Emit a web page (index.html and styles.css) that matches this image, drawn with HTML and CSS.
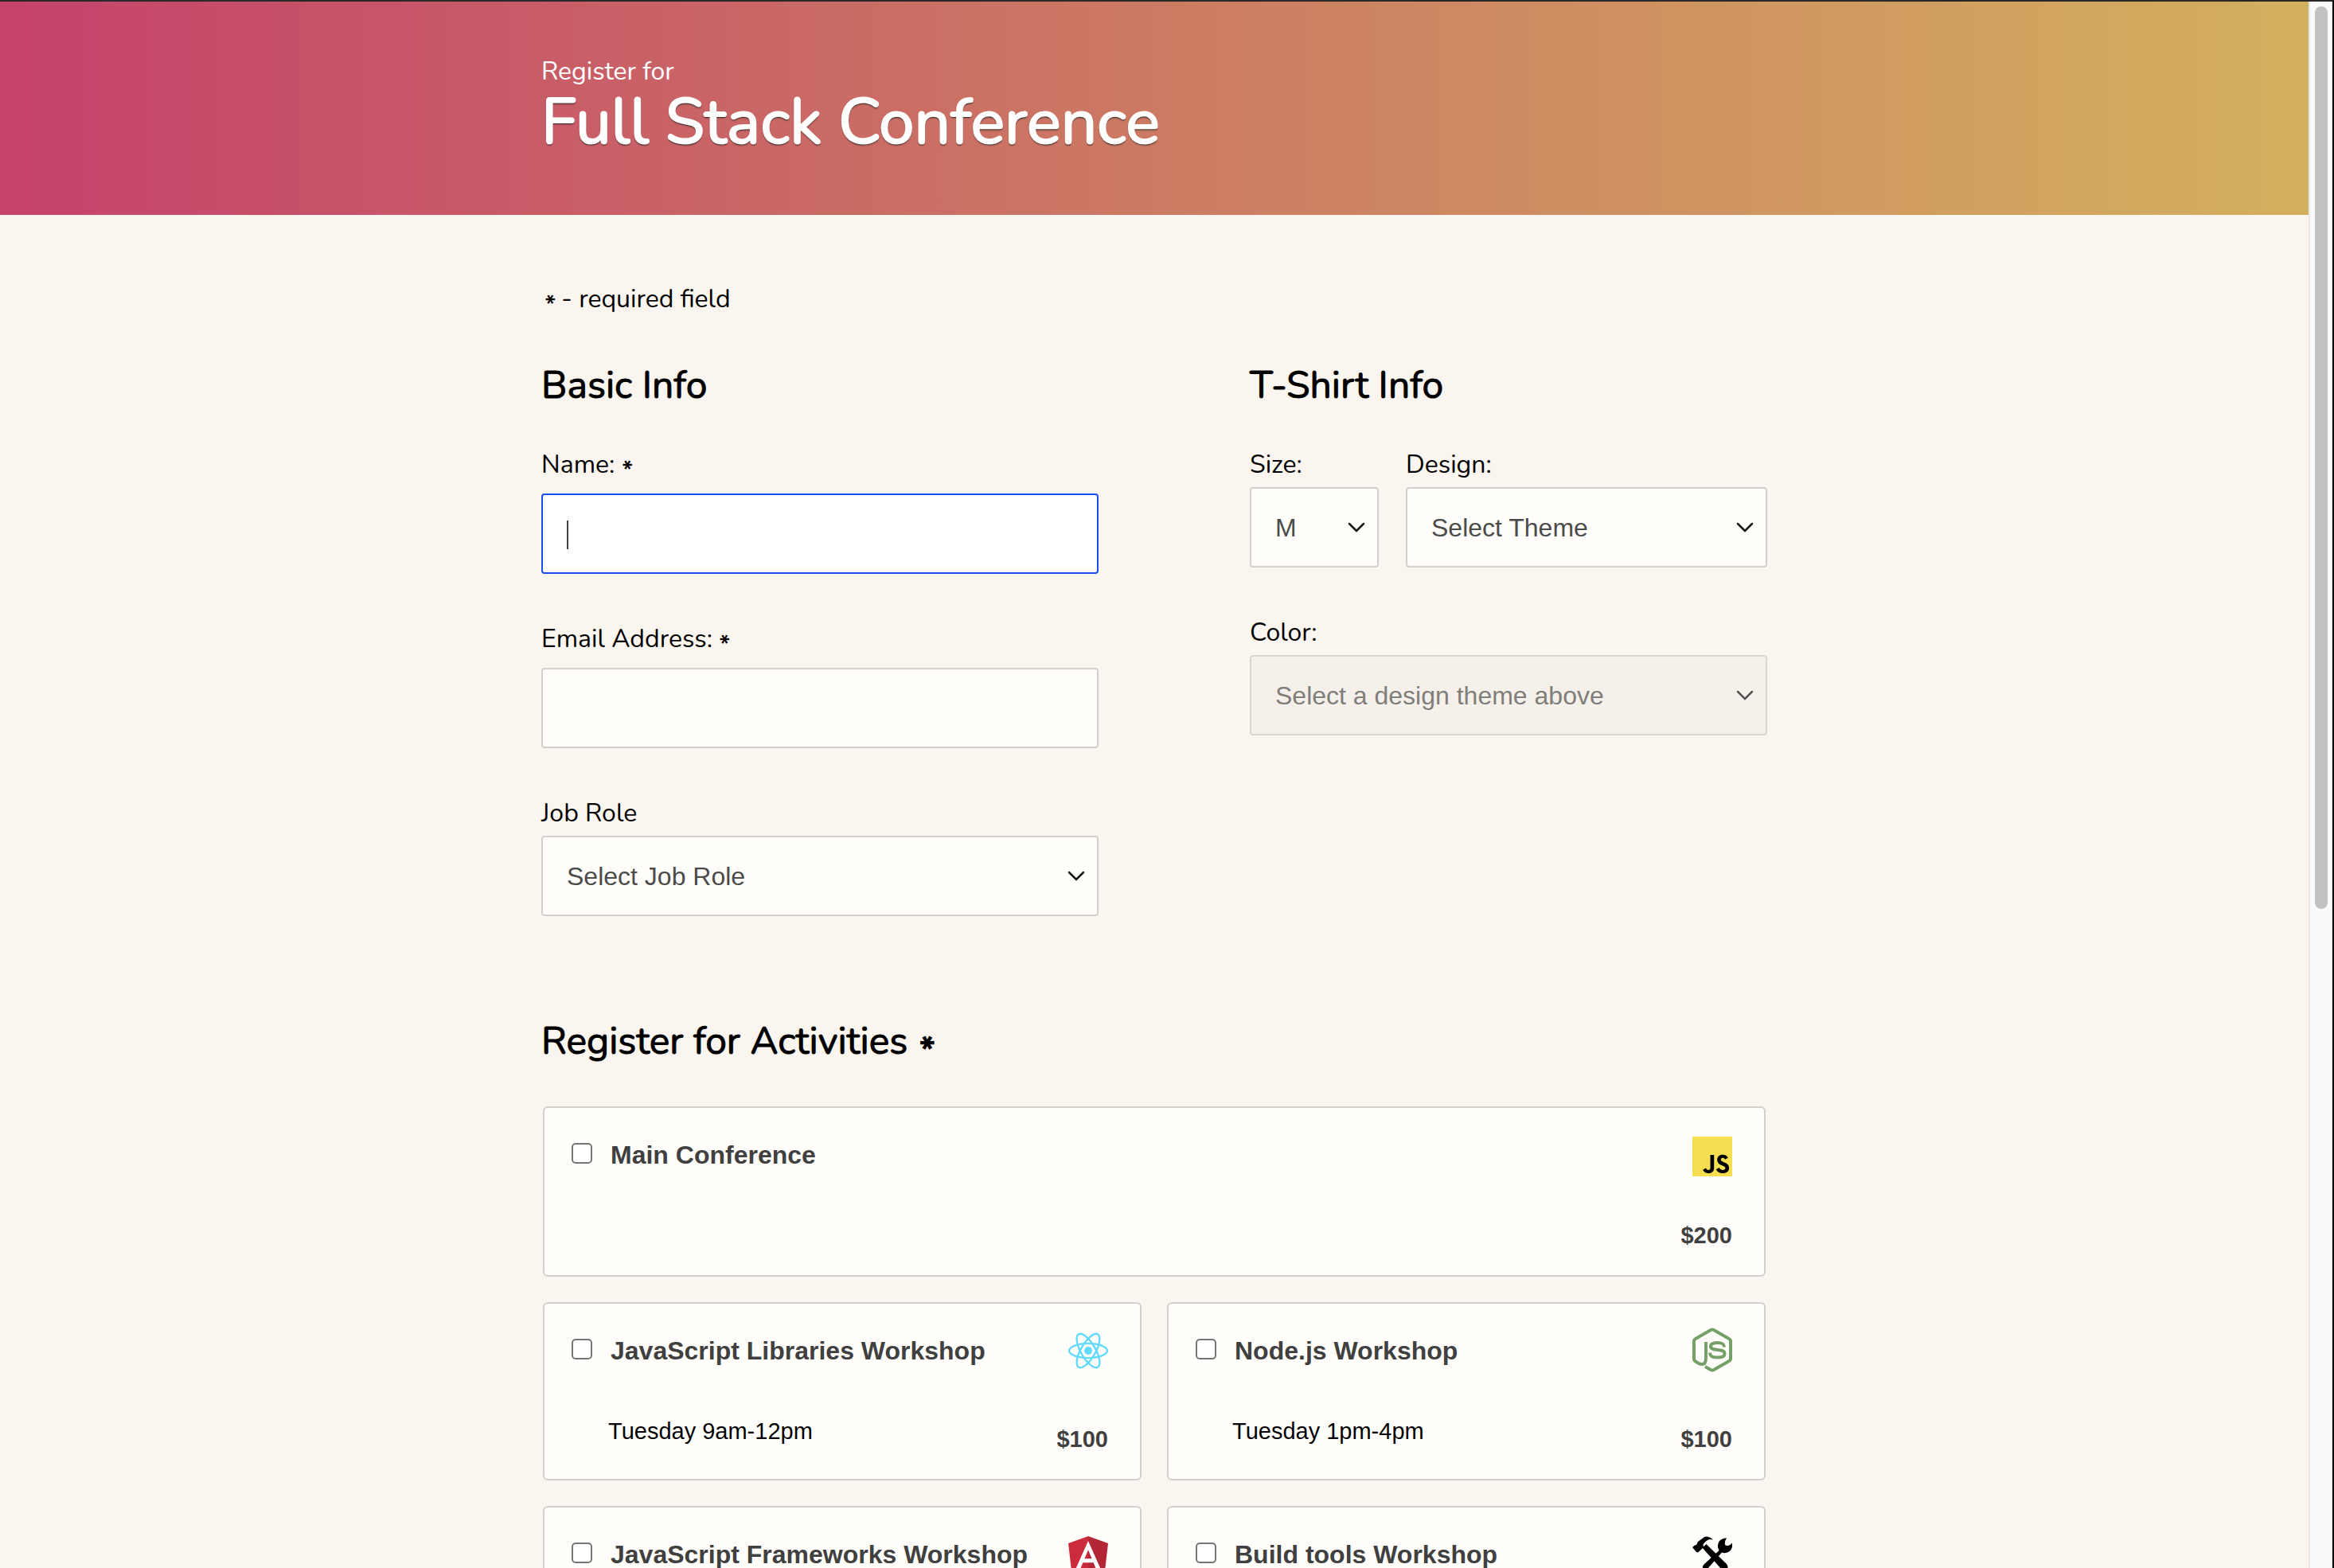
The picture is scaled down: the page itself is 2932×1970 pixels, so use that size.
FILE: index.html
```html
<!DOCTYPE html>
<html lang="en">
<head>
  <meta charset="utf-8">
  <meta name="viewport" content="width=device-width, initial-scale=1">
  <title>Full Stack Conference</title>
  <link rel="stylesheet" href="styles.css">
</head>
<body>
  <div class="window">
    <div class="page">
      <header class="header">
        <div class="container">
          <p class="header-lead">Register for</p>
          <h1 class="header-title">Full Stack Conference</h1>
        </div>
      </header>

      <form class="container form">
        <p class="note"><span class="asterisk">*</span> - required field</p>

        <div class="columns">
          <fieldset class="group">
            <legend class="heading">Basic Info</legend>
            <div class="fields">
              <div class="field field--text">
                <label for="name">Name: <span class="asterisk">*</span></label>
                <div class="input-wrap">
                  <input class="control control--active" type="text" id="name" name="user-name">
                  <span class="caret"></span>
                </div>
              </div>
              <div class="field field--text">
                <label for="email">Email Address: <span class="asterisk">*</span></label>
                <input class="control" type="email" id="email" name="user-email">
              </div>
              <div class="field">
                <label for="title">Job Role</label>
                <select class="control control--select" id="title" name="user-title">
                  <option>Select Job Role</option>
                </select>
              </div>
            </div>
          </fieldset>

          <fieldset class="group">
            <legend class="heading">T-Shirt Info</legend>
            <div class="fields">
              <div class="shirt-row">
                <div class="field">
                  <label for="size">Size:</label>
                  <select class="control control--select" id="size" name="user-size">
                    <option>M</option>
                  </select>
                </div>
                <div class="field">
                  <label for="design">Design:</label>
                  <select class="control control--select" id="design" name="user-design">
                    <option>Select Theme</option>
                  </select>
                </div>
              </div>
              <div class="field">
                <label for="color">Color:</label>
                <select class="control control--select" id="color" name="user-color" disabled>
                  <option>Select a design theme above</option>
                </select>
              </div>
            </div>
          </fieldset>
        </div>

        <fieldset class="group activities">
          <legend class="heading">Register for Activities <span class="asterisk asterisk--large">*</span></legend>
          <div class="cards">
            <label class="card card--wide">
              <input class="card-check" type="checkbox" name="all">
              <span class="card-body">
                <span class="card-title">Main Conference</span>
              </span>
              <span class="card-side">
                <span class="card-icon">
                  <svg width="50" height="50" viewBox="0 0 630 630" aria-hidden="true">
                    <path fill="#f5de50" d="M0 0h630v630H0z"/>
                    <path d="M423.2 492.19c12.69 20.72 29.2 35.95 58.4 35.95 24.53 0 40.2-12.26 40.2-29.2 0-20.3-16.1-27.49-43.1-39.3l-14.8-6.35c-42.72-18.2-71.1-41-71.1-89.2 0-44.4 33.83-78.2 86.7-78.2 37.64 0 64.7 13.1 84.2 47.4l-46.1 29.6c-10.15-18.2-21.1-25.37-38.1-25.37-17.34 0-28.33 11-28.33 25.37 0 17.76 11 24.95 36.4 35.95l14.8 6.34c50.3 21.57 78.7 43.56 78.7 93 0 53.3-41.87 82.5-98.1 82.5-54.98 0-90.5-26.2-107.88-60.54zm-209.13 5.13c9.3 16.5 17.76 30.45 38.1 30.45 19.45 0 31.72-7.61 31.72-37.2v-201.3h59.2v202.1c0 61.3-35.94 89.2-88.4 89.2-47.4 0-74.85-24.53-88.81-54.075z"/>
                  </svg>
                </span>
                <span class="card-cost">$200</span>
              </span>
            </label>

            <label class="card">
              <input class="card-check" type="checkbox" name="js-libs">
              <span class="card-body">
                <span class="card-title">JavaScript Libraries Workshop</span>
                <span class="card-time">Tuesday 9am-12pm</span>
              </span>
              <span class="card-side">
                <span class="card-icon">
                  <svg width="50" height="54" viewBox="-11.5 -12.42 23 24.84" aria-hidden="true">
                    <circle r="2.3" fill="#61dafb"/>
                    <g fill="none" stroke="#61dafb" stroke-width="1.1">
                      <ellipse rx="11" ry="4.2"/>
                      <ellipse rx="11" ry="4.2" transform="rotate(60)"/>
                      <ellipse rx="11" ry="4.2" transform="rotate(120)"/>
                    </g>
                  </svg>
                </span>
                <span class="card-cost">$100</span>
              </span>
            </label>

            <label class="card">
              <input class="card-check" type="checkbox" name="node">
              <span class="card-body">
                <span class="card-title">Node.js Workshop</span>
                <span class="card-time">Tuesday 1pm-4pm</span>
              </span>
              <span class="card-side">
                <span class="card-icon">
                  <svg width="50" height="56" viewBox="0 0 50 56" fill="none" stroke="#75a068" stroke-width="4" aria-hidden="true">
                    <path d="M17 18V38Q17 46 12 46Q10 46 8 45L4 42.5Q2 41.5 2 39V17Q2 15 4 14L23 3Q25 2 27 3L46 14Q48 15 48 17V39Q48 41 46 42L27 53Q25 54 23 53L16 49"/>
                    <path d="M40 24.5C40 20 37 19 31 19C26 19 23 20.5 23 23.5C23 27 27 27.500 32 28C37 28.5 40.5 29 40.5 33C40.5 36.5 37 37.5 31.5 37.5C25 37.5 22 36 22 31.5"/>
                  </svg>
                </span>
                <span class="card-cost">$100</span>
              </span>
            </label>

            <label class="card">
              <input class="card-check" type="checkbox" name="js-frameworks">
              <span class="card-body">
                <span class="card-title">JavaScript Frameworks Workshop</span>
                <span class="card-time">Tuesday 9am-12pm</span>
              </span>
              <span class="card-side">
                <span class="card-icon">
                  <svg width="50" height="50" viewBox="31.9 30 186.2 186.2" overflow="visible" aria-hidden="true">
                    <path fill="#cb2b3a" d="M125 30 31.9 63.2l14.2 123.1L125 230z"/>
                    <path fill="#b32636" d="M125 30v200l78.9-43.7 14.2-123.1z"/>
                    <path fill="#fff" d="M125 52.1 66.8 182.6h21.7l11.7-29.2h49.4l11.7 29.2H183L125 52.1zm17 83.3h-34l17-40.9z"/>
                  </svg>
                </span>
                <span class="card-cost">$100</span>
              </span>
            </label>

            <label class="card">
              <input class="card-check" type="checkbox" name="build-tools">
              <span class="card-body">
                <span class="card-title">Build tools Workshop</span>
                <span class="card-time">Tuesday 1pm-4pm</span>
              </span>
              <span class="card-side">
                <span class="card-icon">
                  <svg width="50" height="50" viewBox="0 0 50 50" aria-hidden="true">
                    <path d="M0 14L3 11.5L5 11L7 7L15 1Q20 -1 26 4.5L21 4Q16 6 13.5 10.5L14 14L7 20.5L5 20Z"/>
                    <path d="M12.5 14.5L17.5 10L43 35Q46 39 43 42Q39 44 36 41Z"/>
                    <path d="M43 2.5Q40 7 41 11Q45 14 50 8.5Q51 17 45 20Q41 22 37 20.5L19 41Q16 44 13.5 41Q12 39 14 36L33.5 18Q30 12 34 6Q38 2 43 2.5Z"/>
                  </svg>
                </span>
                <span class="card-cost">$100</span>
              </span>
            </label>
          </div>
        </fieldset>
      </form>
    </div>
    <div class="scrollbar" aria-hidden="true"><div class="scrollbar-thumb"></div></div>
  </div>
</body>
</html>
```
FILE: styles.css
```css
*,
*::before,
*::after {
  box-sizing: border-box;
}

body {
  margin: 0;
  background: #faf5ef;
  color: #000;
  font-family: Nunito, Lato, sans-serif;
  font-size: 32px;
  line-height: 40px;
}

p,
h1 {
  margin: 0;
}

.window {
  display: flex;
  height: 100vh;
  overflow: hidden;
  border-top: 2px solid #2a2829;
  border-right: 2px solid #000;
}

.page {
  flex: 1;
  min-width: 0;
}

.scrollbar {
  width: 30px;
  padding: 6px 4px 6px 6px;
  background: #fafafa;
  border-left: 2px solid #e8e8e8;
  border-right: 2px solid #f0f0f0;
}

.scrollbar-thumb {
  width: 16px;
  height: 58%;
  border-radius: 8px;
  background: #c1c1c1;
}

.container {
  width: 100%;
  max-width: 1540px;
  margin: 0 auto;
}

/* Header */
.header {
  padding: 68px 0 72px;
  background: linear-gradient(90deg, #c5426b, #cc7a63 50%, #d3b05e);
  color: #fff;
}

.header-title {
  font-size: 80px;
  font-weight: 400;
  line-height: 88px;
  text-shadow: 0 2px 2px #222;
  -webkit-text-stroke: 2px #fff;
}

/* Form */
.form {
  padding-top: 86px;
}

.columns {
  display: grid;
  grid-template-columns: 70fr 65fr;
  column-gap: 190px;
  margin-top: 58px;
}

.group {
  min-width: 0;
  margin: 0;
  padding: 0;
  border: 0;
}

.heading {
  padding: 0;
  font-size: 48px;
  line-height: 60px;
  -webkit-text-stroke: 1px #000;
}

.fields {
  display: flex;
  flex-direction: column;
  gap: 62px;
  padding-top: 50px;
}

.field {
  display: flex;
  flex-direction: column;
  gap: 8px;
}

.field--text {
  gap: 16px;
}

.shirt-row {
  display: grid;
  grid-template-columns: 162px 1fr;
  gap: 34px;
}

.asterisk {
  display: inline-block;
  margin-left: -6px;
  font-family: Inter, sans-serif;
  font-size: 28px;
  font-weight: 600;
  line-height: 28px;
  transform: rotate(90deg);
}

.asterisk--large {
  font-size: 40px;
  line-height: 40px;
}

.note .asterisk {
  margin: 0 4px 0 -2px;
}

.control {
  display: block;
  width: 100%;
  height: 101px;
  margin: 0;
  padding: 0 30px;
  border: 2px solid #d3cfca;
  border-radius: 4px;
  background-color: #fffefb;
  color: #4b4b4a;
  font-family: Helvetica, "Liberation Sans", sans-serif;
  font-size: 32px;
  outline: 0;
}

.control--active {
  border-color: #184ff0;
  background-color: #fff;
}

.control--select {
  appearance: none;
  background-image: url("data:image/svg+xml,%3Csvg xmlns='http://www.w3.org/2000/svg' width='22' height='14' fill='none' stroke='%23111' stroke-width='2.5' stroke-linecap='round'%3E%3Cpath d='M2 2l9 9 9-9'/%3E%3C/svg%3E");
  background-repeat: no-repeat;
  background-position: right 15px center;
}

.control:disabled {
  opacity: 1;
  border-color: #d9d5cf;
  background-color: #f5f0ea;
  background-image: url("data:image/svg+xml,%3Csvg xmlns='http://www.w3.org/2000/svg' width='22' height='14' fill='none' stroke='%23565452' stroke-width='2.5' stroke-linecap='round'%3E%3Cpath d='M2 2l9 9 9-9'/%3E%3C/svg%3E");
  color: #807e7b;
}

.input-wrap {
  position: relative;
}

.caret {
  position: absolute;
  top: 34px;
  left: 32px;
  width: 2px;
  height: 36px;
  background: #444;
}

/* Activities */
.activities {
  margin-top: 127px;
}

.cards {
  display: grid;
  grid-template-columns: 1fr 1fr;
  gap: 32px;
  padding: 52px 2px 32px;
}

.card {
  display: flex;
  gap: 20px;
  padding: 36px 40px 30px 34px;
  border: 2px solid #d3cfca;
  border-radius: 6px;
  background: #fffefb;
  color: #404040;
  font-family: Helvetica, "Liberation Sans", sans-serif;
}

.card--wide {
  grid-column: 1 / -1;
}

.card-check {
  appearance: none;
  flex: none;
  width: 26px;
  height: 26px;
  margin: 8px 0 0;
  border: 2px solid #767676;
  border-radius: 5px;
  background: #fff;
}

.card-body {
  display: flex;
  flex: 1;
  flex-direction: column;
  gap: 61px;
  padding: 3px 0 10px;
}

.card-title {
  padding-left: 3px;
  font-weight: 700;
}

.card-time {
  color: #000;
  font-size: 29px;
}

.card-side {
  display: flex;
  flex-direction: column;
  align-items: flex-end;
  justify-content: space-between;
  gap: 54px;
}

.card-icon {
  display: flex;
  align-items: flex-end;
  height: 50px;
}

.card-icon svg {
  flex: none;
}

.card-cost {
  font-size: 29px;
  font-weight: 700;
}
```
